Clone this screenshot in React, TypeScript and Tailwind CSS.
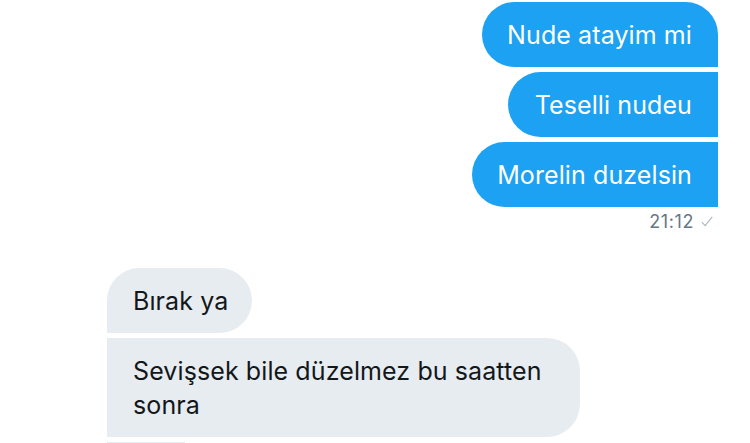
import React from "react";

const font = { fontFamily: "Inter, 'Noto Sans', sans-serif" };

export default function App() {
  return (
    <div className="w-[750px] h-[443px] overflow-hidden bg-white" style={font}>
      <div className="flex flex-col items-end pr-[32px] pt-[2px] gap-[5px]">
        <div className="bg-[#1da1f2] text-white text-[25px] leading-[34px] pt-[16px] pb-[15px] pl-[25px] pr-[26px] rounded-l-[33px] rounded-tr-[33px] tracking-[0.1px]">
          Nude atayim mi
        </div>
        <div className="bg-[#1da1f2] text-white text-[25px] leading-[34px] pt-[16px] pb-[15px] pl-[27px] pr-[26px] rounded-l-[33px] tracking-[0.1px]">
          Teselli nudeu
        </div>
        <div className="bg-[#1da1f2] text-white text-[25px] leading-[34px] pt-[16px] pb-[15px] pl-[25px] pr-[26px] rounded-l-[33px] tracking-[0.1px]">
          Morelin duzelsin
        </div>
      </div>
      <div className="flex items-center justify-end pr-[37px] mt-[4px] h-[20px] gap-[7px] text-[#657786] text-[18px] tracking-[0.6px]">
        <span>21:12</span>
        <svg width="12" height="11" viewBox="0 0 12 11" fill="none">
          <path d="M0.8 6.2 L4.2 9.6 L11.2 0.8" stroke="#aab8c2" strokeWidth="1.1" />
        </svg>
      </div>
      <div className="flex flex-col items-start pl-[107px] mt-[37px] gap-[5px]">
        <div className="bg-[#e6ecf0] text-[#14171a] text-[25px] leading-[34px] pt-[16px] pb-[15px] pl-[26px] pr-[24px] rounded-r-[33px] rounded-tl-[33px] tracking-[0.1px]">
          Bırak ya
        </div>
        <div className="bg-[#e6ecf0] text-[#14171a] text-[25px] leading-[34px] pt-[16px] pb-[15px] pl-[26px] pr-[26px] rounded-r-[33px] max-w-[473px] w-[473px] tracking-[0.1px]">
          Sevişsek bile düzelmez bu saatten sonra
        </div>
        <div className="bg-[#e6ecf0] w-[78px] h-[40px]" />
      </div>
    </div>
  );
}
